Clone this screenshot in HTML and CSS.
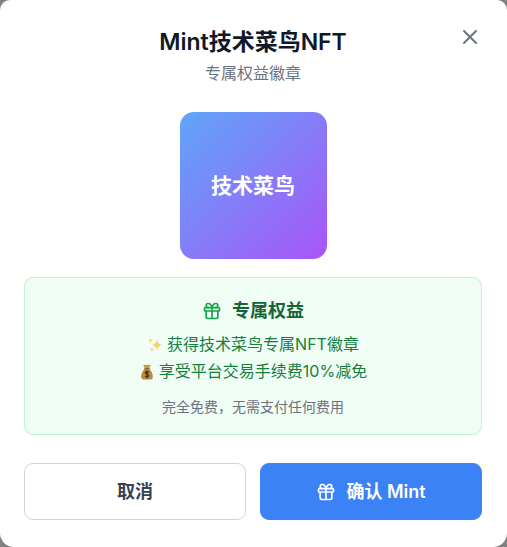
FILE: index.html
```html
<!DOCTYPE html>
<html lang="zh-CN">
<head>
<meta charset="utf-8">
<meta name="viewport" content="width=device-width, initial-scale=1">
<title>Mint技术菜鸟NFT</title>
<link rel="stylesheet" href="styles.css">
</head>
<body>
<svg class="sprite" aria-hidden="true">
  <symbol id="gift" viewBox="0 0 24 24">
    <rect x="3" y="8" width="18" height="4" rx="1"/>
    <path d="M12 8v13M19 12v7a2 2 0 0 1-2 2H7a2 2 0 0 1-2-2v-7M7.5 8a2.5 2.5 0 0 1 0-5A4.8 8 0 0 1 12 8a4.8 8 0 0 1 4.500-5 2.500 2.500 0 0 1 0 5"/>
  </symbol>
</svg>
<main class="dialog" role="dialog" aria-labelledby="title">
  <button class="close" type="button" aria-label="关闭">
    <svg class="icon icon-close" viewBox="0 0 24 24"><path d="M18 6 6 18M6 6l12 12"/></svg>
  </button>
  <header class="header">
    <h1 class="title" id="title">Mint技术菜鸟NFT</h1>
    <p class="subtitle">专属权益徽章</p>
  </header>
  <div class="badge">技术菜鸟</div>
  <section class="benefits">
    <h2 class="benefits-title"><svg class="icon icon-green" aria-hidden="true"><use href="#gift"/></svg>专属权益</h2>
    <ul class="benefits-list">
      <li>
        <svg class="emoji" viewBox="0 0 16 16" aria-hidden="true">
          <path fill="#fbcf62" d="M10 2.500Q10.600 7.400 15.500 8Q10.600 8.600 10 13.500Q9.400 8.600 4.500 8Q9.400 7.400 10 2.500Z"/>
          <path fill="#fbd67c" d="M3.500 1Q3.800 3.200 6 3.500Q3.800 3.800 3.500 6Q3.200 3.800 1 3.500Q3.200 3.200 3.500 1ZM5 10Q5.300 12.200 7.500 12.500Q5.300 12.800 5 15Q4.700 12.800 2.500 12.500Q4.700 12.200 5 10Z"/>
        </svg>
        <span>获得技术菜鸟专属NFT徽章</span>
      </li>
      <li>
        <svg class="emoji" viewBox="0 0 16 16" aria-hidden="true">
          <path fill="#b98a3c" d="M5.500 5C3.500 7 2 10 2.200 13Q2.300 15.500 5 15.500H11Q13.700 15.500 13.800 13C14 10 12.500 7 10.500 5Z"/>
          <path fill="#c99b48" d="M5.700 4.200 4.300 1.200Q6 .2 7 1Q8 .2 9 1Q10.500.2 11.700 1.200L10.300 4.200Z"/>
          <path fill="none" stroke="#72511f" d="M5.300 4.700h5.400"/>
          <path fill="none" stroke="#3f321b" stroke-width="1.200" d="M10 8.300Q8 7 6.500 8.200C5.500 10 10.300 10 9.700 12Q8.500 13.600 6 12.300M8 6.500v8"/>
        </svg>
        <span>享受平台交易手续费10%减免</span>
      </li>
    </ul>
    <p class="note">完全免费，无需支付任何费用</p>
  </section>
  <div class="actions">
    <button class="button button-cancel" type="button">取消</button>
    <button class="button button-confirm" type="button"><svg class="icon" aria-hidden="true"><use href="#gift"/></svg>确认 Mint</button>
  </div>
</main>
</body>
</html>
```
FILE: styles.css
```css
* {
  box-sizing: border-box;
  margin: 0;
  padding: 0;
}

body {
  background: #808080;
  font-family: Inter, "Noto Sans CJK SC", sans-serif;
  font-size: 16px;
  line-height: 24px;
}

.sprite {
  position: absolute;
  width: 0;
  height: 0;
}

.dialog {
  position: relative;
  min-height: 100vh;
  padding: 28px 25px 27px 24px;
  background: #fff;
  border-radius: 10px 10px 14px 14px;
  text-align: center;
}

.icon {
  width: 20px;
  height: 20px;
  flex: none;
  fill: none;
  stroke: currentColor;
  stroke-width: 2;
  stroke-linecap: round;
  stroke-linejoin: round;
}

.close {
  position: absolute;
  top: 25px;
  right: 25px;
  display: flex;
  border: 0;
  background: none;
  color: #6b7280;
}

.icon-close {
  width: 24px;
  height: 24px;
}

.title {
  color: #111827;
  font-size: 23px;
  font-weight: 600;
  line-height: 28px;
}

.subtitle {
  margin-top: 5px;
  color: #6b7280;
}

.badge {
  display: flex;
  align-items: center;
  justify-content: center;
  width: 147px;
  height: 147px;
  margin: 27px auto 18px;
  border-radius: 14px;
  background: linear-gradient(135deg, #60a5fa, #a855f7);
  color: #fff;
  font-size: 21px;
  font-weight: 700;
}

.benefits {
  padding: 19px 18px 15px;
  border: 1px solid #bbf7d0;
  border-radius: 9px;
  background: #f0fdf4;
}

.benefits-title {
  display: flex;
  align-items: center;
  justify-content: center;
  gap: 10px;
  color: #166534;
  font-size: 18px;
  font-weight: 600;
  line-height: 28px;
}

.icon-green {
  color: #16a34a;
}

.benefits-list {
  margin-top: 6px;
  color: #15803d;
  list-style: none;
}

.benefits-list li {
  display: flex;
  align-items: center;
  justify-content: center;
  gap: 4px;
  line-height: 27px;
}

.emoji {
  width: 16px;
  height: 16px;
}

.note {
  margin-top: 10px;
  color: #6b7280;
  font-size: 14px;
  line-height: 24px;
}

.actions {
  display: grid;
  grid-template-columns: 1fr 1fr;
  gap: 14px;
  margin-top: 28px;
}

.button {
  display: flex;
  align-items: center;
  justify-content: center;
  gap: 10px;
  padding: 14px;
  border: 1px solid #d1d5db;
  border-radius: 9px;
  background: #fff;
  color: #374151;
  font: inherit;
  font-size: 18px;
  font-weight: 600;
  line-height: 27px;
}

.button-confirm {
  border-color: #3b82f6;
  background: #3b82f6;
  color: #fff;
}
```
